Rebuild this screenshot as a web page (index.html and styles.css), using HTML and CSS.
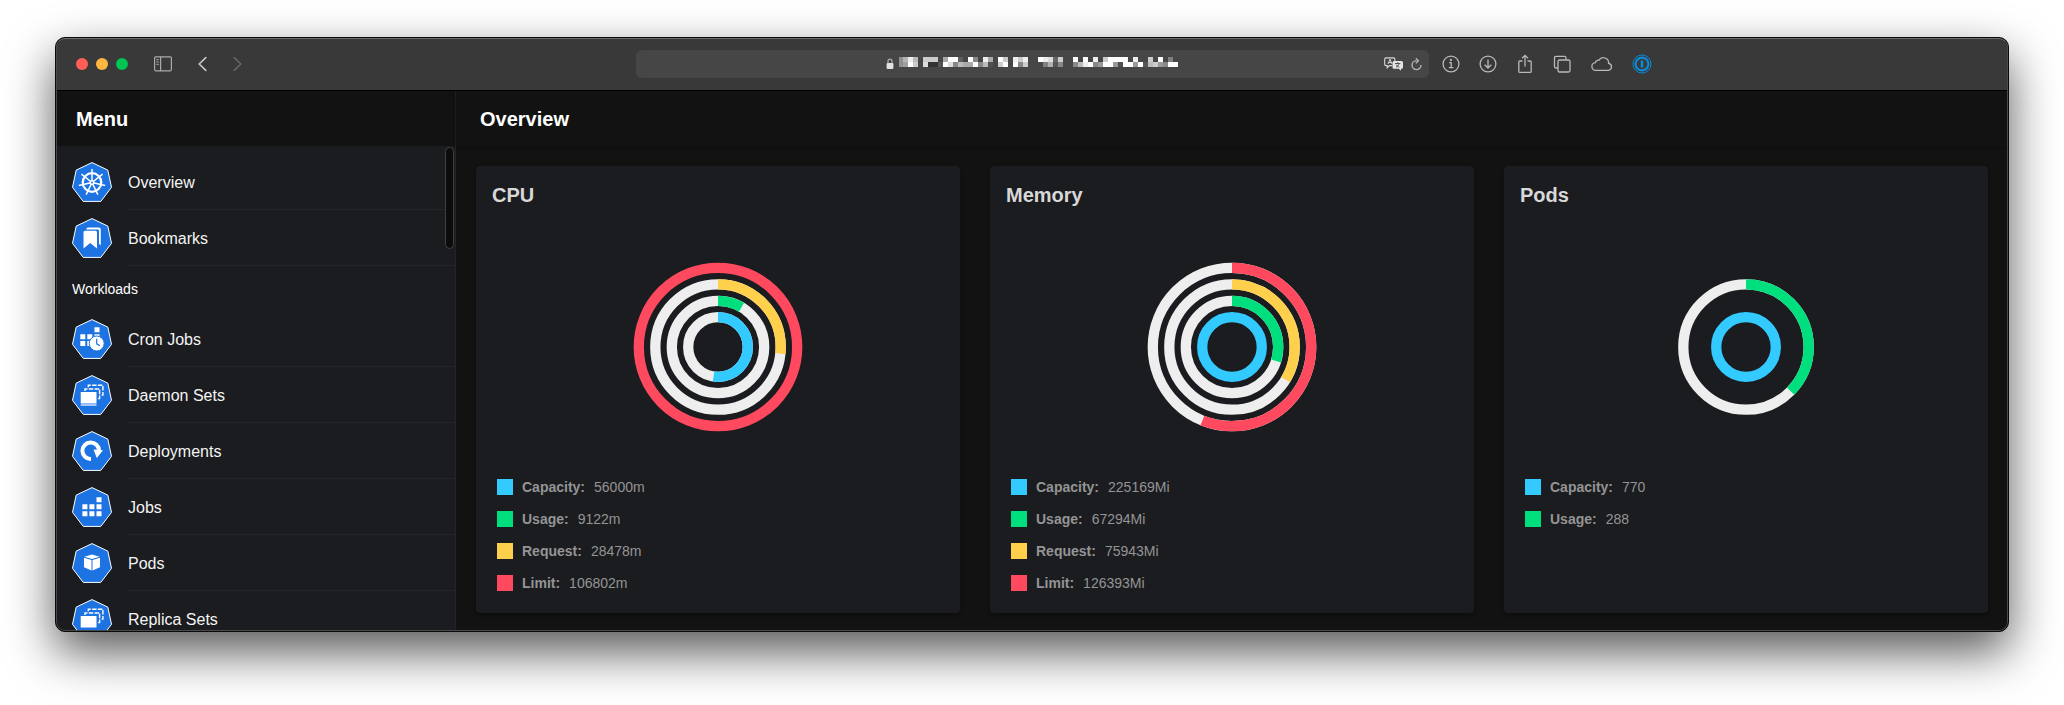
FILE: index.html
```html
<!DOCTYPE html>
<html lang="en">
<head>
<meta charset="utf-8">
<title>Overview</title>
<link rel="stylesheet" href="styles.css">
</head>
<body>
<svg class="defs" aria-hidden="true">
  <symbol id="hepta" viewBox="0 0 40 40"><path d="M20 .6 35.8 8.1 39.5 25.3 28.8 39.4H11.2L.5 25.3 4.2 8.1Z" fill="#1d73e2" stroke="#fff" stroke-width="1"/></symbol>
  <symbol id="stack" viewBox="0 0 40 40">
    <path d="M8.700 17h15.800v11.500H8.700z" fill="#fff"/>
    <path d="M13 16v-2h14.6v9.6h-2" fill="none" stroke="#fff" stroke-width="1.4" stroke-dasharray="4.500 1.3"/>
    <path d="M16.3 12.3v-2h14.6v9.8h-2" fill="none" stroke="#fff" stroke-width="1.4" stroke-dasharray="4.500 1.3"/>
  </symbol>
</svg>
<div class="window">
  <header class="toolbar">
    <div class="tools-left">
      <div class="lights">
        <button class="light red" aria-label="Close"></button>
        <button class="light yellow" aria-label="Minimize"></button>
        <button class="light green" aria-label="Zoom"></button>
      </div>
      <button class="tool" aria-label="Sidebar"><svg width="18" height="16" viewBox="0 0 18 16" fill="none" stroke="#aaaaab"><rect x=".6" y=".8" width="16.8" height="14" rx="1.2" stroke-width="1.2"/><path d="M6.6 1v14" stroke-width="1.2"/><path d="M2.3 3.7h2.6M2.3 6h2.6M2.3 8.3h2.6" stroke-width="1"/></svg></button>
      <button class="tool" aria-label="Back"><svg width="9" height="16" viewBox="0 0 9 16" fill="none" stroke="#c8c8c9" stroke-width="1.6" stroke-linecap="round" stroke-linejoin="round"><path d="M7.8 1.6 1.2 8l6.6 6.4"/></svg></button>
      <button class="tool" aria-label="Forward"><svg width="9" height="16" viewBox="0 0 9 16" fill="none" stroke="#656566" stroke-width="1.6" stroke-linecap="round" stroke-linejoin="round"><path d="M1.2 1.6 7.8 8l-6.6 6.4"/></svg></button>
    </div>
    <div class="address">
      <div class="address-main">
        <svg width="8" height="12" viewBox="0 0 8 12"><path d="M2 6V3.2a2 2 0 0 1 4 0V6" fill="none" stroke="#b0b0b1" stroke-width="1.2"/><rect x=".6" y="5" width="6.8" height="6" rx="1" fill="#e2e2e6"/></svg>
        <svg id="mosaic" width="280" height="10" viewBox="1 0 280 10" shape-rendering="crispEdges" role="img" aria-label="Hidden address"></svg>
      </div>
      <div class="address-tools">
        <button class="tool" aria-label="Translate"><svg width="20" height="14" viewBox="0 0 20 14"><path d="M2 .9h7.6q1.3 0 1.3 1.3V4M8 8.6H5.2L3.2 10.800V8.600H2Q.7 8.600.7 7.300V2.200Q.7.9 2 .9" fill="none" stroke="#d8d8d9" stroke-width="1.1"/><path d="m4 7 2-4.800L8 7M4.700 5.500h2.600" fill="none" stroke="#d8d8d9" stroke-width="1"/><path d="M10 4h7.500Q19 4 19 5.500v4.700q0 1.500-1.500 1.500H17v2.100l-2.200-2.100H10q-1.500 0-1.500-1.500V5.500Q8.500 4 10 4" fill="#e6e6e7"/><path d="M11 6.500h5.400M13.700 5.200v1.300M12 10.300q2.500-1.200 3.200-3.700M12.200 7.600q1 2 3.200 2.800" fill="none" stroke="#464647" stroke-width=".9"/></svg></button>
        <button class="tool" aria-label="Reload"><svg width="11" height="14" viewBox="0 0 11 14" fill="none" stroke="#b4b4b5" stroke-width="1.400"><path d="M5.500 3.600A4.500 4.500 0 1 0 10 8.100M4.800 1.200 7.400 3.700 4.800 6.300"/></svg></button>
      </div>
    </div>
    <div class="tools-right">
      <button class="tool" aria-label="Info"><svg width="18" height="18" viewBox="0 0 18 18" fill="none" stroke="#b9b9ba" stroke-width="1.300"><circle cx="9" cy="9" r="7.900"/><path d="M7.200 7.700h2v4.800M6.800 12.700h4.600"/><circle cx="8.900" cy="5" r=".5" fill="#b9b9ba"/></svg></button>
      <button class="tool" aria-label="Downloads"><svg width="18" height="18" viewBox="0 0 18 18" fill="none" stroke="#b9b9ba" stroke-width="1.300"><circle cx="9" cy="9" r="7.900"/><path d="M9 4.500v8.300M5.700 9.800 9 13l3.300-3.200"/></svg></button>
      <button class="tool" aria-label="Share"><svg width="18" height="20" viewBox="0 0 18 20" fill="none" stroke="#b9b9ba" stroke-width="1.300"><path d="M6.500 7H4Q2.800 7 2.800 8.200v9q0 1.200 1.200 1.200h10q1.200 0 1.200-1.200v-9Q15.200 7 14 7h-2.500M9 12.500V1.500M6 4.300l3-3 3 3"/></svg></button>
      <button class="tool" aria-label="Tabs"><svg width="18" height="18" viewBox="0 0 18 18" fill="none" stroke="#b9b9ba" stroke-width="1.300"><rect x="5" y="5" width="12" height="12" rx="1.500"/><path d="M5 13H3Q1.500 13 1.500 11.500V3Q1.500 1.300 3 1.300h8.500Q13 1.300 13 3v2"/></svg></button>
      <button class="tool" aria-label="iCloud"><svg width="23" height="16" viewBox="0 0 23 16" fill="none" stroke="#b9b9ba" stroke-width="1.300"><path d="M6 14.300a3.800 3.800 0 0 1-.6-7.600A3 3 0 0 1 9 4.200a5.200 5.200 0 0 1 9.600 3.200 3.500 3.500 0 0 1 0 6.900Z"/></svg></button>
      <button class="tool" aria-label="Password manager"><svg width="20" height="20" viewBox="0 0 20 20" fill="none" stroke="#0c8bd6"><circle cx="10" cy="10" r="9" stroke-width="1"/><circle cx="10" cy="10" r="6.400" stroke-width="2.200"/><path d="M10 6.500v7" stroke-width="2.600"/></svg></button>
    </div>
  </header>

  <div class="app">
    <nav class="sidebar">
      <div class="bar menu-bar"><h2>Menu</h2></div>
      <div class="menu">
        <a class="item" href="#overview"><svg class="icon" viewBox="0 0 40 40"><use href="#hepta"/><g fill="none" stroke="#fff"><circle cx="20" cy="20.500" r="9.300" stroke-width="2.200"/><g stroke-width="1.500"><path id="sp" d="M20 20.500V7"/><use href="#sp" transform="rotate(51.430 20 20.500)"/><use href="#sp" transform="rotate(102.860 20 20.500)"/><use href="#sp" transform="rotate(154.290 20 20.500)"/><use href="#sp" transform="rotate(205.710 20 20.500)"/><use href="#sp" transform="rotate(257.140 20 20.500)"/><use href="#sp" transform="rotate(308.570 20 20.500)"/></g></g><circle cx="20" cy="20.500" r="2.500" fill="#fff"/><circle cx="20" cy="20.500" r="1" fill="#1d73e2"/></svg><span class="label">Overview</span></a>
        <a class="item" href="#bookmarks"><svg class="icon" viewBox="0 0 40 40"><use href="#hepta"/><path d="M11.500 14.300q0-1.500 1.500-1.500h10.500q1.500 0 1.500 1.500v16.200l-6.800-5.500-6.700 5.500Z" fill="#fff"/><path d="M14.500 10.600q.6-1 1.700-1h10.600q2 0 2 2v15.600l-1.800-1.400V12.400q0-1-1-1H14.300Z" fill="#fff"/></svg><span class="label">Bookmarks</span></a>
        <h3 class="group">Workloads</h3>
        <a class="item" href="#cronjobs"><svg class="icon" viewBox="0 0 40 40"><use href="#hepta"/><path d="M8.300 15.200h5v5h-5zM8.300 22.100h5v5h-5zM15.300 15.200h5v5h-5zM15.300 22.100h5v5h-5zM22.500 8.200h5v5h-5zM22.500 15.200h5v3h-5z" fill="#fff"/><circle cx="24.700" cy="24.500" r="7.500" fill="#fff" stroke="#1d73e2" stroke-width="1"/><path d="M24.700 19.800v5l3.300 2" fill="none" stroke="#1d73e2" stroke-width="1.200"/></svg><span class="label">Cron Jobs</span></a>
        <a class="item" href="#daemonsets"><svg class="icon" viewBox="0 0 40 40"><use href="#hepta"/><use href="#stack"/><path d="M8.700 30h15.800" stroke="#fff" stroke-width="1.200"/></svg><span class="label">Daemon Sets</span></a>
        <a class="item" href="#deployments"><svg class="icon" viewBox="0 0 40 40"><use href="#hepta"/><path d="M19 28a8.300 8.300 0 1 1 8-8.500" fill="none" stroke="#fff" stroke-width="4"/><path d="m21.500 18.500 9.500.7-6.200 7.800Z" fill="#fff"/></svg><span class="label">Deployments</span></a>
        <a class="item" href="#jobs"><svg class="icon" viewBox="0 0 40 40"><use href="#hepta"/><path d="M24.500 10.200h5v5h-5zM10.400 17.200h5v5h-5zM17.400 17.200h5v5h-5zM24.500 17.200h5v5h-5zM10.400 24.300h5v5h-5zM17.400 24.300h5v5h-5zM24.500 24.300h5v5h-5z" fill="#fff"/></svg><span class="label">Jobs</span></a>
        <a class="item" href="#pods"><svg class="icon" viewBox="0 0 40 40"><use href="#hepta"/><path d="m20 11.500 7.700 2.200L20 16l-7.700-2.300ZM12 14.800l7.500 2.300v10.400L12 24.200ZM28 14.800l-7.500 2.300v10.400l7.500-3.300Z" fill="#fff"/></svg><span class="label">Pods</span></a>
        <a class="item" href="#replicasets"><svg class="icon" viewBox="0 0 40 40"><use href="#hepta"/><use href="#stack"/></svg><span class="label">Replica Sets</span></a>
        <div class="thumb"></div>
      </div>
    </nav>

    <main class="main">
      <div class="bar"><h1>Overview</h1></div>
      <div class="cards">
        <section class="card">
          <h2>CPU</h2>
          <svg class="chart" viewBox="0 0 200 200" role="img" aria-label="CPU chart">
            <g class="track"><circle cx="100" cy="100" r="29.800"/><circle cx="100" cy="100" r="46.200"/><circle cx="100" cy="100" r="62.700"/></g>
            <g class="arcs" transform="rotate(-90 100 100)">
              <circle class="s-blue" cx="100" cy="100" r="29.800" pathLength="100" stroke-dasharray="52.400 100"/>
              <circle class="s-green" cx="100" cy="100" r="46.200" pathLength="100" stroke-dasharray="8.500 100"/>
              <circle class="s-yellow" cx="100" cy="100" r="62.700" pathLength="100" stroke-dasharray="26.700 100"/>
              <circle class="s-red" cx="100" cy="100" r="79.200"/>
            </g>
          </svg>
          <dl class="legend">
            <div><i class="blue"></i><dt>Capacity:</dt><dd>56000m</dd></div>
            <div><i class="green"></i><dt>Usage:</dt><dd>9122m</dd></div>
            <div><i class="yellow"></i><dt>Request:</dt><dd>28478m</dd></div>
            <div><i class="red"></i><dt>Limit:</dt><dd>106802m</dd></div>
          </dl>
        </section>
        <section class="card">
          <h2>Memory</h2>
          <svg class="chart" viewBox="0 0 200 200" role="img" aria-label="Memory chart">
            <g class="track"><circle cx="100" cy="100" r="46.200"/><circle cx="100" cy="100" r="62.700"/><circle cx="100" cy="100" r="79.200"/></g>
            <g class="arcs" transform="rotate(-90 100 100)">
              <circle class="s-blue" cx="100" cy="100" r="29.800"/>
              <circle class="s-green" cx="100" cy="100" r="46.200" pathLength="100" stroke-dasharray="29.900 100"/>
              <circle class="s-yellow" cx="100" cy="100" r="62.700" pathLength="100" stroke-dasharray="33.700 100"/>
              <circle class="s-red" cx="100" cy="100" r="79.200" pathLength="100" stroke-dasharray="56.100 100"/>
            </g>
          </svg>
          <dl class="legend">
            <div><i class="blue"></i><dt>Capacity:</dt><dd>225169Mi</dd></div>
            <div><i class="green"></i><dt>Usage:</dt><dd>67294Mi</dd></div>
            <div><i class="yellow"></i><dt>Request:</dt><dd>75943Mi</dd></div>
            <div><i class="red"></i><dt>Limit:</dt><dd>126393Mi</dd></div>
          </dl>
        </section>
        <section class="card">
          <h2>Pods</h2>
          <svg class="chart" viewBox="0 0 200 200" role="img" aria-label="Pods chart">
            <g class="track"><circle cx="100" cy="100" r="62.700"/></g>
            <g class="arcs" transform="rotate(-90 100 100)">
              <circle class="s-blue" cx="100" cy="100" r="29.800"/>
              <circle class="s-green" cx="100" cy="100" r="62.700" pathLength="100" stroke-dasharray="37.400 100"/>
            </g>
          </svg>
          <dl class="legend">
            <div><i class="blue"></i><dt>Capacity:</dt><dd>770</dd></div>
            <div><i class="green"></i><dt>Usage:</dt><dd>288</dd></div>
          </dl>
        </section>
      </div>
    </main>
  </div>
</div>
<script src="mosaic.js"></script>
</body>
</html>
```

FILE: styles.css
```css
* { box-sizing: border-box; }
body {
  margin: 0;
  height: 100vh;
  padding: 37px 55px 73px;
  background: #fff;
  color: #fff;
  font-family: "Liberation Sans", Arial, sans-serif;
  overflow: hidden;
}
h1, h2, h3, dl, dd { margin: 0; }
.defs { position: absolute; width: 0; height: 0; }
svg { display: block; }
.window {
  height: 100%;
  display: flex;
  flex-direction: column;
  position: relative;
  border: 1px solid #0a0a0b;
  border-radius: 10px;
  background: #121212;
  box-shadow: 0 20px 48px rgba(0, 0, 0, .66);
  overflow: hidden;
}
.window::after {
  content: "";
  position: absolute;
  inset: 0;
  border: 1px solid #4a4a4b;
  border-top-color: #6e6e6f;
  border-radius: 9px;
  pointer-events: none;
}
.toolbar {
  flex: none;
  height: 53px;
  display: grid;
  grid-template-columns: 580fr 793fr 579fr;
  align-items: center;
  background: #39393a;
  border-bottom: 1px solid #000;
}
.tools-left { display: flex; align-items: center; gap: 26px; padding-left: 20px; }
.lights { display: flex; gap: 8px; }
.light { width: 12px; height: 12px; padding: 0; border: 0; border-radius: 50%; }
.light.red { background: #ff5f57; }
.light.yellow { background: #ffb741; }
.light.green { background: #00c452; }
.tool { padding: 0; border: 0; background: none; }
.address {
  height: 28px;
  display: grid;
  grid-template-columns: 1fr auto 1fr;
  align-items: center;
  border-radius: 6px;
  background: #464647;
}
.address-main { grid-column: 2; display: flex; align-items: center; gap: 5px; }
#mosaic { margin-bottom: 4px; }
.address-tools { display: flex; align-items: center; justify-content: flex-end; gap: 7px; padding-right: 7px; }
.tools-right { display: flex; align-items: center; gap: 19px; padding-left: 13px; }

.app { flex: 1; min-height: 0; display: flex; }
.bar {
  flex: none;
  height: 55px;
  display: flex;
  align-items: center;
  padding: 0 24px;
  background: #121212;
  box-shadow: 0 1px 3px rgba(0, 0, 0, .25);
  position: relative;
}
.menu-bar { padding: 0 20px; }
.bar h1, .bar h2, .card h2 { font-size: 20px; line-height: 26px; font-weight: 700; }
.sidebar {
  flex: none;
  width: 400px;
  display: flex;
  flex-direction: column;
  border-right: 1px solid #242425;
}
.menu {
  flex: 1;
  min-height: 0;
  overflow: hidden;
  position: relative;
  padding-top: 8px;
  background: #1b1c1f;
}
.item { height: 56px; display: flex; align-items: center; gap: 16px; padding-left: 16px; color: #f4f4f4; font-size: 16px; text-decoration: none; }
.icon { width: 40px; height: 40px; flex: none; }
.label { flex: 1; height: 56px; line-height: 57px; border-bottom: 1px solid #242528; }
.group { height: 45px; line-height: 47px; padding-left: 16px; font-size: 14px; font-weight: 400; }
.thumb { position: absolute; top: 1px; right: 1px; width: 9px; height: 102px; border: 1px solid #404042; border-radius: 5px; background: #0c0c0e; }

.main { flex: 1; min-width: 0; display: flex; flex-direction: column; }
.cards {
  flex: 1;
  display: grid;
  grid-template-columns: repeat(3, minmax(0, 1fr));
  gap: 30px;
  padding: 20px 20px 18px;
}
.card { padding: 16px 16px 14px; border-radius: 4px; background: #1b1c1f; box-shadow: 0 2px 4px rgba(0, 0, 0, .3); }
.card h2 { color: #d8d8d9; }
.chart { width: 200px; height: 200px; margin: 39px auto 0; }
.track circle, .arcs circle { fill: none; stroke-width: 10.300; }
.track circle { stroke: #eee; }
.arcs .s-blue { stroke: #32caff; }
.arcs .s-green { stroke: #00df7e; }
.arcs .s-yellow { stroke: #ffd04b; }
.arcs .s-red { stroke: #ff495f; }
.legend { padding: 24px 5px 0; color: #949495; font-size: 14px; line-height: 32px; }
.legend div { display: flex; align-items: center; gap: 9px; height: 32px; }
.legend i { width: 16px; height: 16px; }
.legend dt { font-weight: 700; }
.blue { background: #32caff; }
.legend .green { background: #00df7e; }
.legend .yellow { background: #ffd04b; }
.legend .red { background: #ff495f; }
```

FILE: mosaic.js
```js
// Grey levels of the obscured address, one hex pair per 5px block ("--" is empty).
const rows = [
  "90 b4 ee bb -- cc cc cc -- aa ff ff 60 -- ff 88 -- ee aa -- ff cc -- ee cc ee -- -- ff ee dd 66 cc -- -- ff -- ff 44 ee -- cc ff ff ff ff -- ee -- -- cc -- ff -- 80 --",
  "90 a0 ff cc -- dd 33 33 55 ff dd 88 bb aa aa ff 88 bb 50 -- cc ff -- ff 88 cc -- -- -- 80 b0 55 88 -- -- 88 bb ee ff 88 99 ff ff 99 50 ff ff 99 ff 55 bb cc 99 88 ff ff"
];
const svg = document.getElementById("mosaic");
rows.forEach((row, y) => row.split(" ").forEach((v, x) => {
  if (v === "--") return;
  const r = document.createElementNS("http://www.w3.org/2000/svg", "rect");
  r.setAttribute("x", x * 5);
  r.setAttribute("y", y * 5);
  r.setAttribute("width", 5);
  r.setAttribute("height", 5);
  r.setAttribute("fill", "#" + v + v + v);
  svg.append(r);
}));
```
